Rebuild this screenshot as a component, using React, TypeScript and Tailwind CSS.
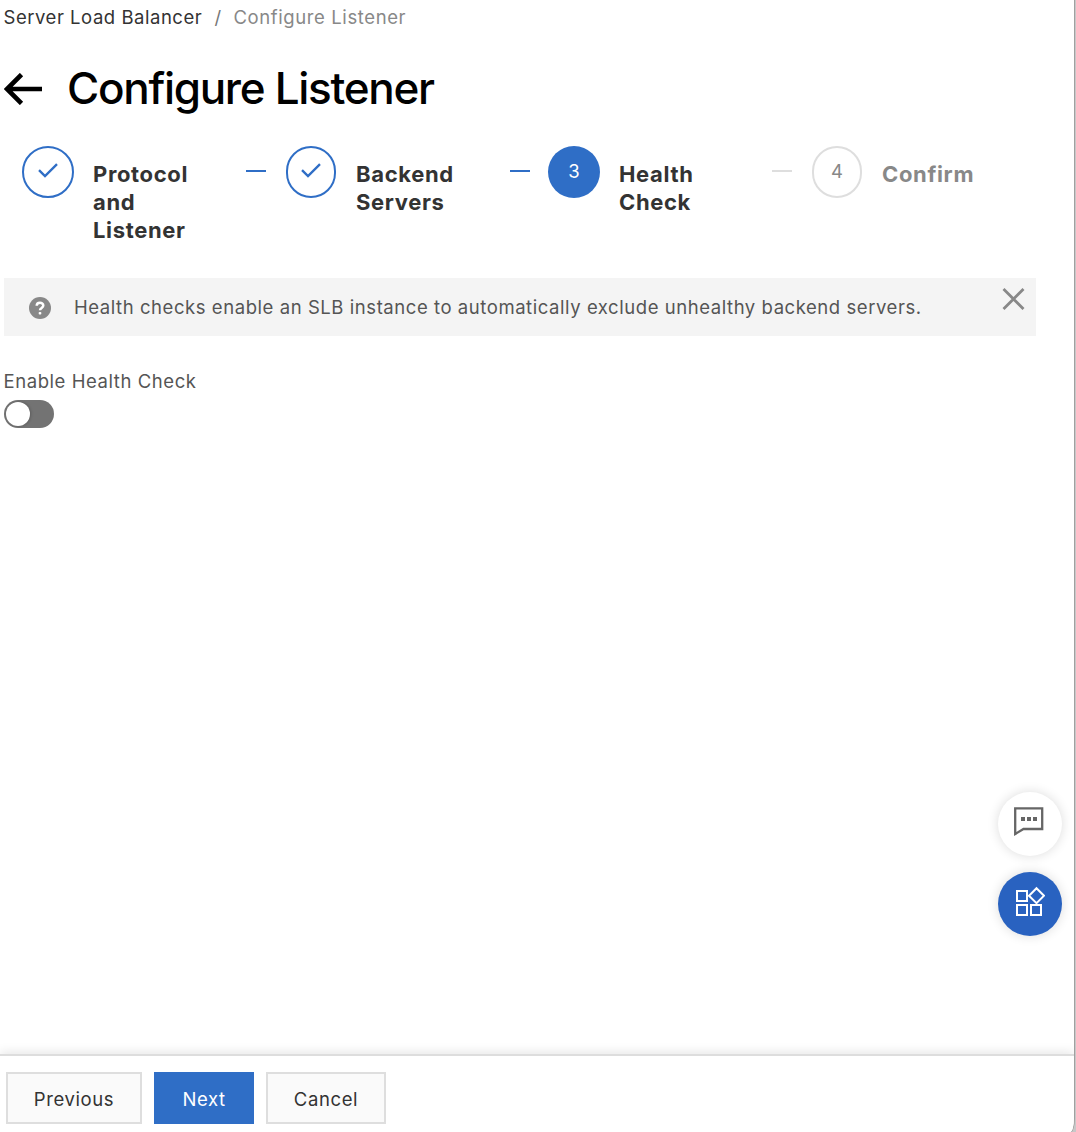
import React from "react";

type StepState = "done" | "current" | "pending";

function Check() {
  return (
    <svg width="20" height="16" viewBox="0 0 20 16" fill="none" stroke="#2f6ec6" strokeWidth="2.4">
      <path d="M1 7.2 L7 13 L19 1.2" />
    </svg>
  );
}

function Dash({ active }: { active: boolean }) {
  return <div className={"mt-6 h-[2px] w-5 shrink-0 " + (active ? "bg-[#2f6ec6]" : "bg-[#dedede]")} />;
}

function Step({ state, label, n, circle, text }: { state: StepState; label: string; n: number; circle: string; text: string }) {
  const look =
    state === "done"
      ? "border-2 border-[#2f6ec6] pb-[2px]"
      : state === "current"
        ? "bg-[#2f6ec6] text-white"
        : "border-2 border-[#dedede] text-[#888888]";
  return (
    <div className="flex items-start">
      <div className={"flex h-[52px] shrink-0 items-center justify-center rounded-full text-[18.5px] " + circle + " " + look}>
        {state === "done" ? <Check /> : n}
      </div>
      <div
        className={
          "mt-[14px] text-[22px] leading-[28px] font-bold tracking-[0.65px] whitespace-pre-line " +
          text +
          (state === "pending" ? " text-[#888888]" : " text-[#333333]")
        }
      >
        {label}
      </div>
    </div>
  );
}

export default function App() {
  return (
    <div className="relative flex h-[1132px] w-[1076px] flex-col overflow-hidden bg-[#c8c8c8] font-['Inter',sans-serif]">
      <div className="flex w-[1074px] grow flex-col overflow-hidden rounded-br-[4px_14px] bg-white shadow-[0_0_0_1px_#a0a0a0]">
        <nav className="flex h-[36px] items-start pl-[3.5px] text-[18.5px] leading-[34px] whitespace-nowrap">
          <span className="w-[211px] tracking-[0.53px] text-[#333333]">Server Load Balancer</span>
          <span className="w-[19px] text-[#777777]">/</span>
          <span className="tracking-[0.6px] text-[#888888]">Configure Listener</span>
        </nav>

        <header className="mt-[23px] flex h-[58px] items-center pl-[4px]">
          <svg className="mt-[2px] -ml-[0.5px]" width="38" height="32" viewBox="0 0 38 32" fill="none" stroke="#000" strokeWidth="4.6">
            <path d="M38 16 H3 M17.5 1.5 L3 16 L17.5 30.5" />
          </svg>
          <h1 className="ml-[25.5px] text-[44px] leading-[58px] font-medium tracking-[-1.3px] whitespace-nowrap text-black">Configure Listener</h1>
        </header>

        <section className="mt-[29px] flex h-[132px] items-start pl-[22px]">
          <div className="flex w-[224px]">
            <Step state="done" n={1} circle="w-[52px]" text="ml-[19px]" label={"Protocol\nand\nListener"} />
          </div>
          <Dash active />
          <div className="ml-5 flex w-[224px]">
            <Step state="done" n={2} circle="w-[50px]" text="ml-[20px]" label={"Backend\nServers"} />
          </div>
          <Dash active />
          <div className="ml-[18px] flex w-[224px]">
            <Step state="current" n={3} circle="w-[52px]" text="ml-[19px]" label={"Health\nCheck"} />
          </div>
          <Dash active={false} />
          <div className="ml-5 flex">
            <Step state="pending" n={4} circle="w-[50px]" text="ml-[20px]" label="Confirm" />
          </div>
        </section>

        <div className="ml-1 flex h-[58px] w-[1032px] shrink-0 items-center bg-[#f4f4f4] pl-[25px]">
          <svg className="mt-px" width="22" height="22" viewBox="0 0 22 22">
            <circle cx="11" cy="11" r="11" fill="#888888" />
            <path d="M7.7 8.8 C7.7 4.8 14.3 4.8 14.3 8.6 C14.3 11 11 10.9 11 13.3" fill="none" stroke="#fff" strokeWidth="2.5" />
            <rect x="9.7" y="15" width="2.6" height="2.6" rx="0.8" fill="#fff" />
          </svg>
          <p className="ml-[23px] w-[928px] shrink-0 pt-[2px] text-[18.5px] tracking-[0.56px] whitespace-nowrap text-[#555555]">
            Health checks enable an SLB instance to automatically exclude unhealthy backend servers.
          </p>
          <svg className="mb-[17px] shrink-0" width="23" height="22" viewBox="0 0 23 22" stroke="#888888" strokeWidth="2.8">
            <path d="M1.5 1 L21.5 21 M21.5 1 L1.5 21" />
          </svg>
        </div>

        <div className="mt-[31px] ml-[3.5px] flex flex-col items-start">
          <span className="text-[18.5px] leading-[28px] tracking-[0.57px] whitespace-nowrap text-[#555555]">Enable Health Check</span>
          <button aria-label="Enable Health Check" className="mt-[5px] ml-[0.5px] flex h-[28px] w-[50px] items-center rounded-full bg-[#737373] pl-[2px]">
            <span className="block h-[24px] w-[24px] rounded-full bg-white shadow-[1px_0_3px_rgba(0,0,0,0.2)]" />
          </button>
        </div>

        <footer className="mt-auto flex h-[78px] shrink-0 items-start gap-3 border-t-2 border-[#dddddd] bg-white pt-4 pl-[6px] text-[18.5px] tracking-[0.6px] shadow-[0_-2px_10px_rgba(0,0,0,0.10)]">
          <button className="h-[52px] w-[136px] border-2 border-[#dedede] bg-[#fafafa] pt-[4px] text-[#333333]">Previous</button>
          <button className="h-[52px] w-[100px] bg-[#2f6ec6] pt-[4px] text-white">Next</button>
          <button className="h-[52px] w-[120px] border-2 border-[#dedede] bg-[#fafafa] pt-[4px] text-[#333333]">Cancel</button>
        </footer>
      </div>

      <div className="absolute top-[792px] left-[998px] flex flex-col gap-4">
        <button aria-label="Chat" className="flex h-16 w-16 items-center justify-center rounded-full bg-white shadow-[0_0_12px_rgba(0,0,0,0.14)]">
          <svg className="-mt-[5px] -ml-[3px]" width="30" height="29" viewBox="0 0 30 29" fill="none">
            <path d="M1.2 1.4 H28.2 V22 H9.5 L1.2 27 Z" stroke="#666666" strokeWidth="2.3" />
            <path d="M7 12 h4 M13 12 h4 M19 12 h4" stroke="#666666" strokeWidth="4" />
          </svg>
        </button>
        <button aria-label="Apps" className="flex h-16 w-16 items-center justify-center rounded-full bg-[#2962c0] shadow-[0_0_12px_rgba(0,0,0,0.14)]">
          <svg className="-mt-[6px]" width="30" height="30" viewBox="0 0 30 30" fill="none" stroke="#fff" strokeWidth="2">
            <path d="M2 5 h10 v10 h-10z M2 19 h10 v10 h-10z M16 19 h10 v10 h-10z M21.5 2.2 L29 9.7 L21.5 17.2 L14 9.7 Z" />
          </svg>
        </button>
      </div>
    </div>
  );
}
